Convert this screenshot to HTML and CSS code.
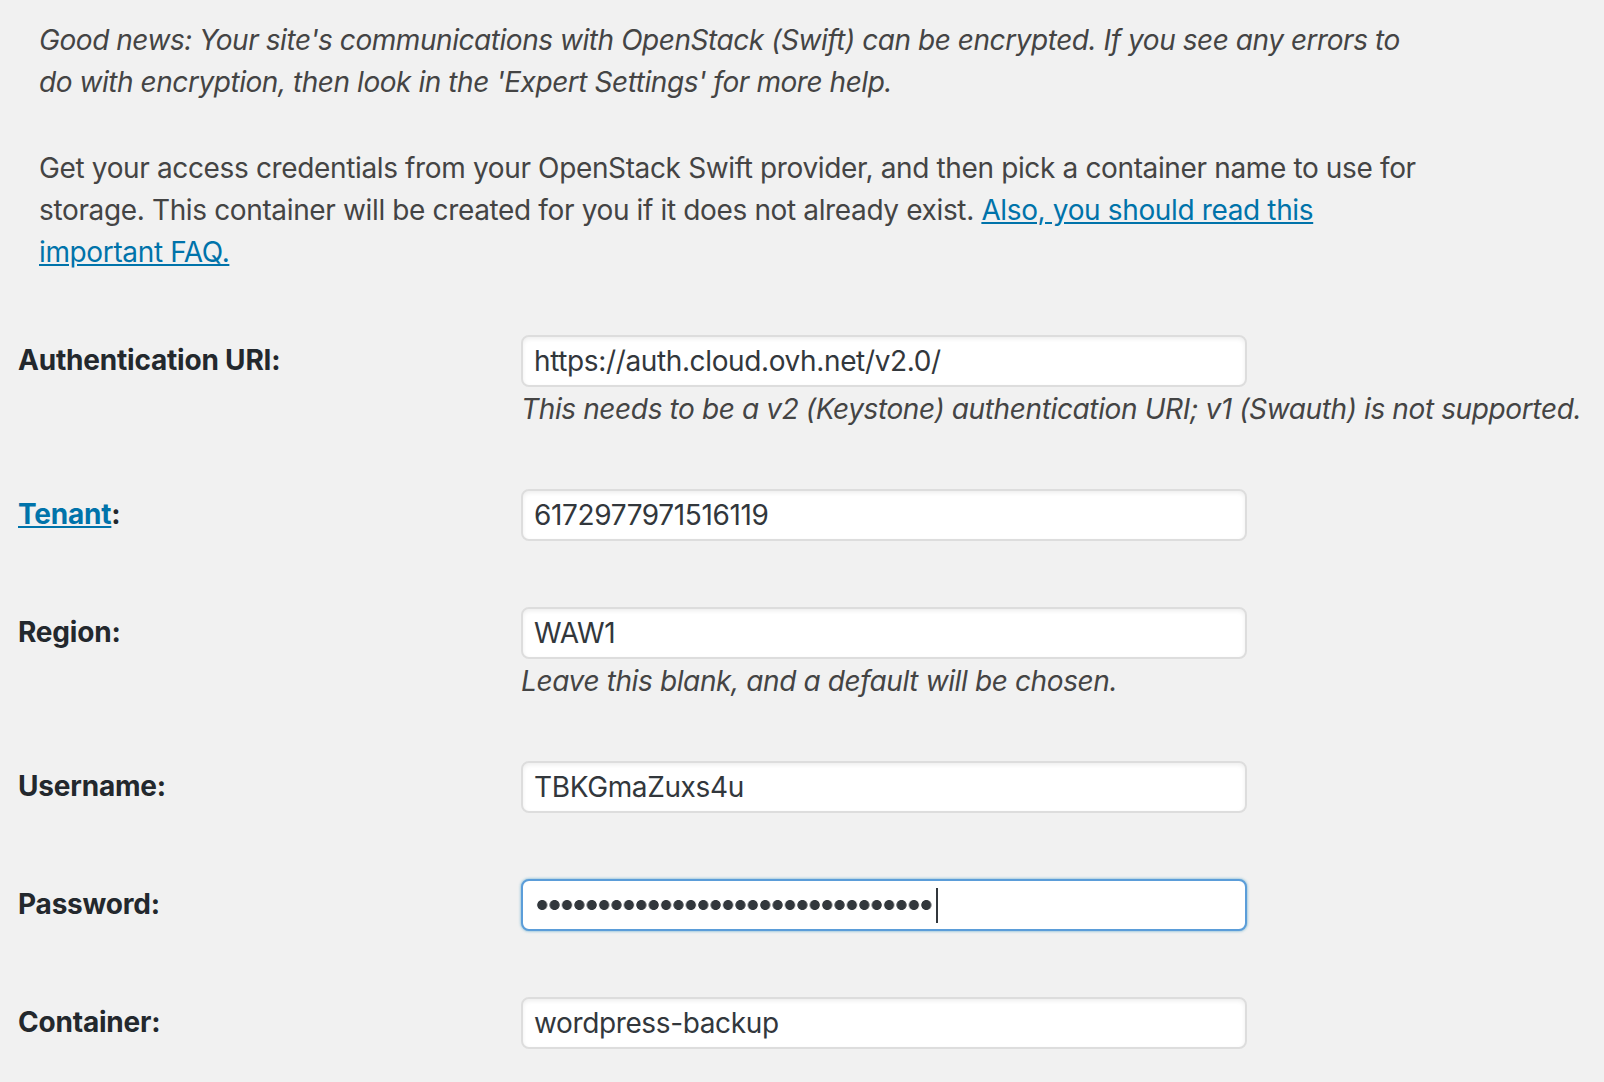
FILE: index.html
```html
<!DOCTYPE html>
<html lang="en">
<head>
<meta charset="utf-8">
<title>OpenStack (Swift) settings</title>
<link rel="stylesheet" href="styles.css">
</head>
<body>
<div class="page">
  <div class="intro">
    <p class="note">Good news: Your site's communications with OpenStack (Swift) can be encrypted. If you see any errors to<br>do with encryption, then look in the 'Expert Settings' for more help.</p>
    <p class="info">Get your access credentials from your OpenStack Swift provider, and then pick a container name to use for<br>storage. This container will be created for you if it does not already exist. <a href="#">Also, you should read this<br>important FAQ.</a></p>
  </div>

  <div class="form">
    <div class="row">
      <label class="label">Authentication URI:</label>
      <div class="field">
        <input class="input" type="text" value="https://auth.cloud.ovh.net/v2.0/">
        <p class="desc">This needs to be a v2 (Keystone) authentication URI; v1 (Swauth) is not supported.</p>
      </div>
    </div>
    <div class="row">
      <label class="label"><a href="#">Tenant</a>:</label>
      <div class="field">
        <input class="input" type="text" value="6172977971516119">
      </div>
    </div>
    <div class="row">
      <label class="label">Region:</label>
      <div class="field">
        <input class="input" type="text" value="WAW1">
        <p class="desc">Leave this blank, and a default will be chosen.</p>
      </div>
    </div>
    <div class="row">
      <label class="label">Username:</label>
      <div class="field">
        <input class="input" type="text" value="TBKGmaZuxs4u">
      </div>
    </div>
    <div class="row">
      <label class="label">Password:</label>
      <div class="field">
        <div class="input focused"><span class="dots" role="img" aria-label="32 hidden password characters"></span><span class="caret"></span></div>
      </div>
    </div>
    <div class="row">
      <label class="label">Container:</label>
      <div class="field">
        <input class="input" type="text" value="wordpress-backup">
      </div>
    </div>
  </div>
</div>
</body>
</html>
```

FILE: styles.css
```css
html, body {
  margin: 0;
  padding: 0;
  background: #f1f1f1;
}

body {
  font-family: Inter, Roboto, "Liberation Sans", sans-serif;
  color: #444;
  font-size: 28px;
}

.page {
  padding: 19px 0 0 18px;
  width: 1586px;
  height: 1063px;
  overflow: hidden;
}

.intro {
  padding-left: 21px;
}

.intro p {
  margin: 0;
  font-size: 28px;
  line-height: 42px;
  white-space: nowrap;
  letter-spacing: -0.36px;
}

.intro p.note {
  font-style: italic;
  margin-bottom: 44px;
  letter-spacing: -0.45px;
}

a {
  color: #0073aa;
  text-decoration: underline;
}

.form {
  margin-top: 62px;
  display: flex;
  flex-direction: column;
  gap: 66px;
}

.row {
  display: flex;
  align-items: flex-start;
}

.label {
  width: 503px;
  flex: none;
  font-weight: bold;
  color: #23282d;
  line-height: 50px;
  font-size: 28px;
  letter-spacing: -0.2px;
}

.field {
  flex: none;
}

.input {
  box-sizing: border-box;
  display: flex;
  align-items: center;
  width: 726px;
  height: 52px;
  margin: 0;
  padding: 0 11px 0 13px;
  border: 2px solid #ddd;
  border-radius: 8px;
  background: #fff;
  box-shadow: inset 0 2px 4px rgba(0, 0, 0, 0.07);
  font-family: Inter, Roboto, "Liberation Sans", sans-serif;
  font-size: 28px;
  letter-spacing: -0.37px;
  color: #32373c;
  outline: none;
}

input.input {
  padding-left: 11px;
}

.input.focused {
  border-color: #5b9dd9;
  box-shadow: 0 0 3px rgba(30, 140, 190, 0.7);
}

.dots {
  display: inline-block;
  width: 397px;
  height: 12px;
  background: radial-gradient(circle, #32373c 4.6px, rgba(50, 55, 60, 0) 5.4px) 0 0 / 12.4px 12px repeat-x;
}

.caret {
  display: inline-block;
  width: 2px;
  height: 35px;
  margin-left: 3px;
  background: #32373c;
}

.desc {
  margin: 8px 0 0;
  font-style: italic;
  line-height: 28px;
  font-size: 28px;
  letter-spacing: -0.38px;
  white-space: nowrap;
  color: #444;
}
```
